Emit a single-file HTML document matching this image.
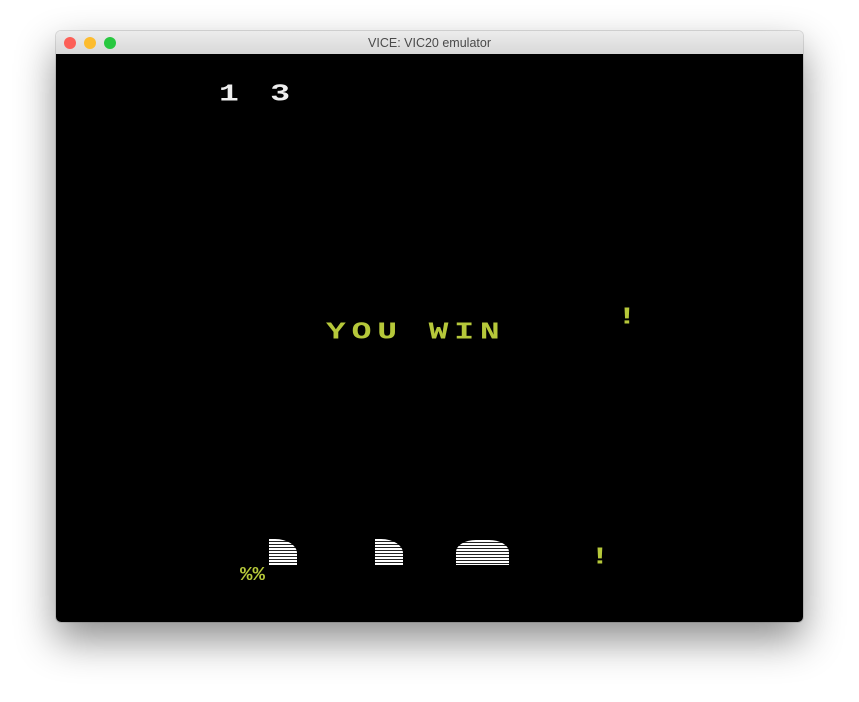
<!DOCTYPE html>
<html><head><style>
html,body{margin:0;padding:0;width:859px;height:702px;background:#fff;overflow:hidden;position:relative}
.win{position:absolute;left:56px;top:31px;width:747px;height:591px;border-radius:5px;overflow:hidden;box-shadow:0 18px 40px rgba(0,0,0,.45),0 0 0 1px rgba(0,0,0,.12)}
.tb{height:23px;background:linear-gradient(#ececec,#d8d8d8);border-bottom:1px solid #b8b8b8;position:relative;font:12.5px "Liberation Sans",sans-serif;color:#4a4a4a;text-align:center;line-height:24px}
.d{position:absolute;top:6px;width:12px;height:12px;border-radius:50%}
.scr{position:absolute;top:23px;left:0;right:0;bottom:0;background:#000}
.t{position:absolute;font:bold 22px "Liberation Mono",monospace;transform:scale(1.5,1.1);transform-origin:0 0;line-height:22px;white-space:pre}
.s{position:absolute;background:repeating-linear-gradient(#fff 0 2px,#222 2px 3px)}
</style></head><body>
<div class="win">
<div class="tb"><div class="d" style="left:8px;background:#fc5f57"></div><div class="d" style="left:28px;background:#fdbc2e"></div><div class="d" style="left:48px;background:#28c840"></div>VICE: VIC20 emulator</div>
<div class="scr">
<div class="t" style="left:163px;top:29px;color:#eee;letter-spacing:3.9px">1 3</div>
<div class="t" style="left:270px;top:267px;color:#b6c83a;letter-spacing:3.9px">YOU WIN</div>
<div class="t" style="left:561px;top:252px;color:#b6c83a">!</div>
<div class="t" style="left:534px;top:492px;color:#b6c83a">!</div>
<div class="t" style="left:184px;top:508px;color:#b6c83a;font-size:16px;transform:scale(1.3,1.2)">%%</div>
<div class="s" style="left:213px;top:485px;width:28px;height:26px;border-top-right-radius:22px 14px"></div>
<div class="s" style="left:319px;top:485px;width:28px;height:26px;border-top-right-radius:22px 14px"></div>
<div class="s" style="left:400px;top:486px;width:53px;height:25px;border-radius:20px 20px 0 0/12px 12px 0 0"></div>
</div></div>
</body></html>
